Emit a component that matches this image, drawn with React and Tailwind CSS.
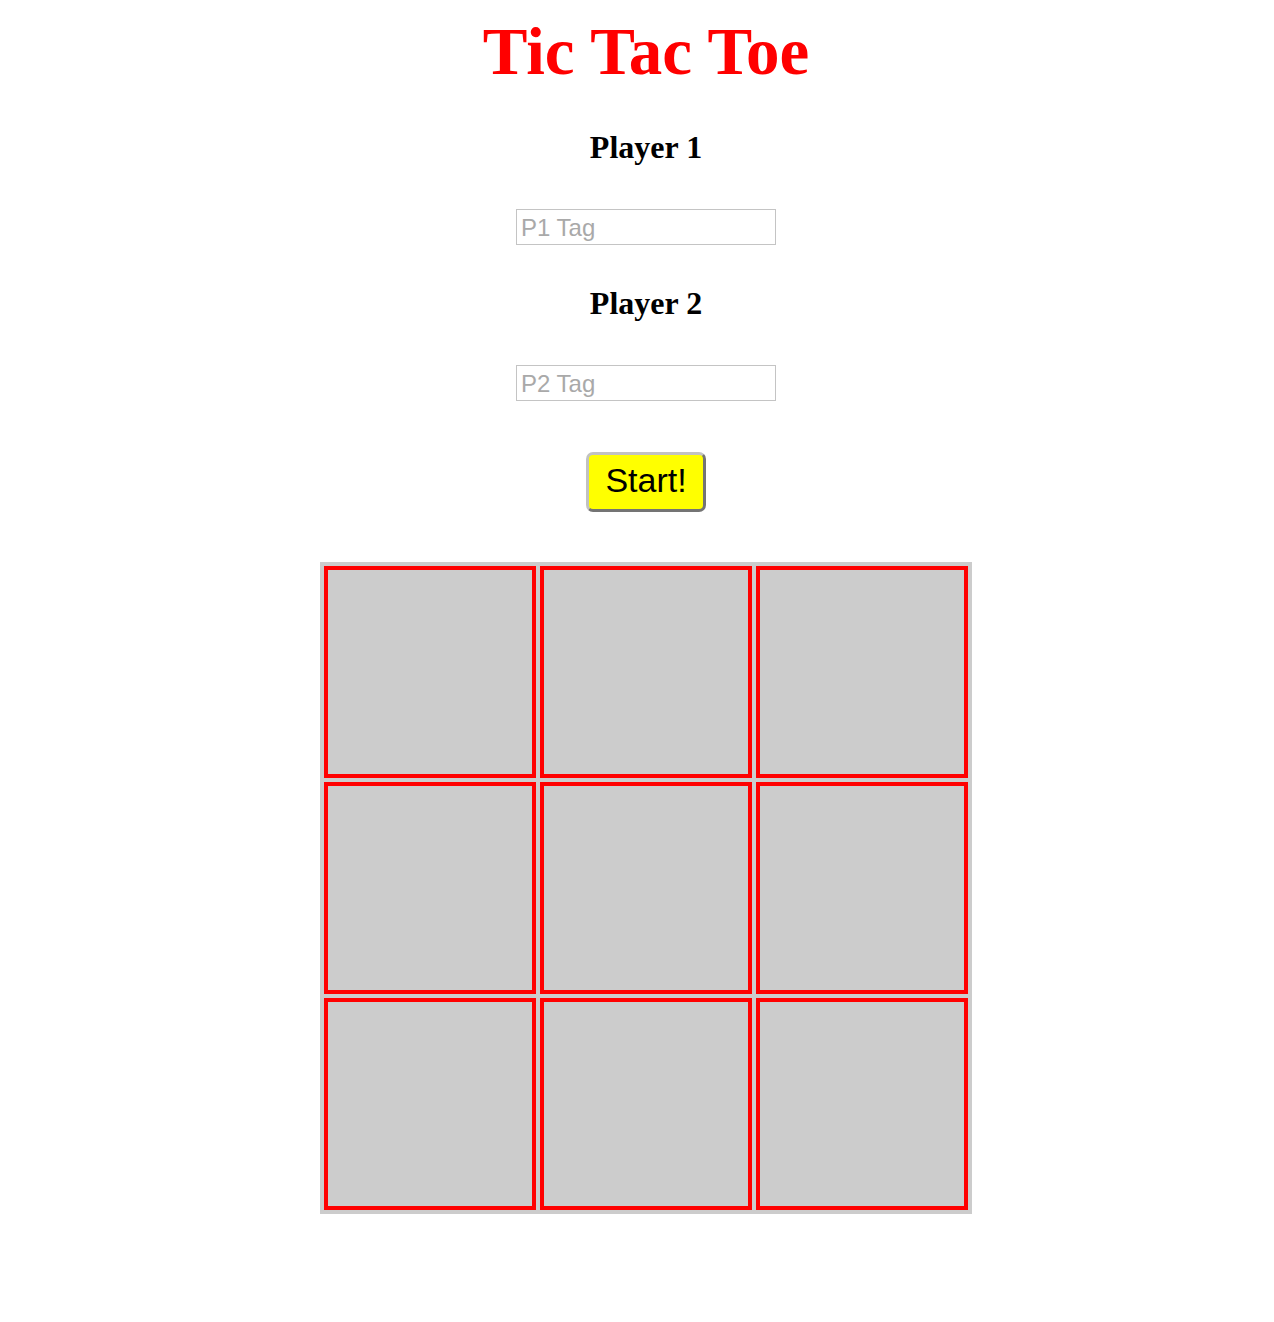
import { useState } from 'react'

function App() {
  const [board, setBoard] = useState(Array(9).fill(''))
  const [p1, setP1] = useState('')
  const [p2, setP2] = useState('')

  return (
    <div className="flex flex-col items-center bg-white min-h-[1322px] pl-[18px]">
      <h1 className="mt-[18px] h-[66px] leading-[66px] text-[67px] font-bold text-[#ff0000] font-['Liberation_Serif',serif]">
        Tic Tac Toe
      </h1>

      <h2 className="mt-[47px] h-[32px] leading-[32px] text-[32px] font-bold text-black font-['Liberation_Serif',serif]">
        Player 1
      </h2>
      <input
        type="text"
        placeholder="P1 Tag"
        value={p1}
        onChange={(e) => setP1(e.target.value)}
        className="mt-[46px] w-[260px] h-[36px] border border-[#c4c4c4] px-[4px] pt-[2px] text-[24px] font-['Liberation_Sans',Arial,sans-serif] placeholder:text-[#a9a9a9] outline-none"
      />

      <h2 className="mt-[42px] h-[32px] leading-[32px] text-[32px] font-bold text-black font-['Liberation_Serif',serif]">
        Player 2
      </h2>
      <input
        type="text"
        placeholder="P2 Tag"
        value={p2}
        onChange={(e) => setP2(e.target.value)}
        className="mt-[46px] w-[260px] h-[36px] border border-[#c4c4c4] px-[4px] pt-[2px] text-[24px] font-['Liberation_Sans',Arial,sans-serif] placeholder:text-[#a9a9a9] outline-none"
      />

      <button
        type="button"
        onClick={() => setBoard(Array(9).fill(''))}
        className="mt-[51px] w-[120px] h-[60px] pb-[4px] bg-[#ffff00] rounded-[7px] border-[3px] border-t-[#c2c2c2] border-l-[#c2c2c2] border-b-[#747474] border-r-[#747474] text-[34px] leading-none text-black font-['Liberation_Sans',Arial,sans-serif]"
      >
        Start!
      </button>

      <div className="mt-[50px] grid grid-cols-[212px_212px_212px] gap-[4px] p-[4px] bg-[#cccccc]">
        {board.map((cell, i) => (
          <div
            key={i}
            className="w-[212px] h-[212px] border-[4px] border-[#ff0000] bg-[#cccccc] flex items-center justify-center text-[96px] font-['Liberation_Sans',sans-serif]"
          >
            {cell}
          </div>
        ))}
      </div>
    </div>
  )
}

export default App
